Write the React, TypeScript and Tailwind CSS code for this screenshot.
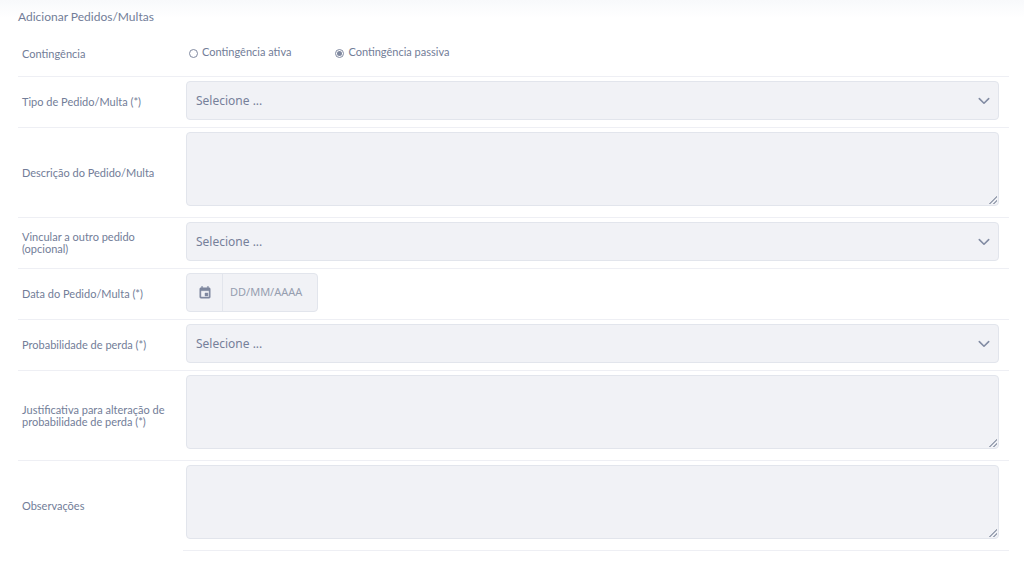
import type { ReactNode } from 'react';

const controlStyle =
  'block w-full rounded border border-[#e2e5ec] bg-[#f1f2f6] font-["Noto_Sans",sans-serif] text-xs text-[#76809a] outline-none focus:border-[#8a93a8]';

const resizerStyle =
  '[&::-webkit-resizer]:bg-[linear-gradient(135deg,transparent_50%,#a0a7b6_50%,#a0a7b6_60%,transparent_60%,transparent_74%,#a0a7b6_74%,#a0a7b6_84%,transparent_84%)] [&::-webkit-resizer]:bg-[length:8px_8px] [&::-webkit-resizer]:bg-[position:right_1px_bottom_1px] [&::-webkit-resizer]:bg-no-repeat';

function Row({ label, htmlFor, last, children }: { label: string; htmlFor: string; last?: boolean; children: ReactNode }) {
  return (
    <div className={last ? 'flex' : 'flex border-b border-[#eeeff4]'}>
      <div className="flex w-[165px] shrink-0 items-center pl-1 pr-4">
        <label htmlFor={htmlFor} className="text-[11px] leading-3">
          {label}
        </label>
      </div>
      <div className={last ? 'min-w-0 grow border-b border-[#eeeff4] pl-[3px] pr-[10px] pt-1' : 'min-w-0 grow pl-[3px] pr-[10px] pt-1'}>
        {children}
      </div>
    </div>
  );
}

function SelectRow({ id, label }: { id: string; label: string }) {
  return (
    <Row label={label} htmlFor={id}>
      <div className="relative mb-[7px]">
        <select id={id} className={`${controlStyle} h-[39px] appearance-none pl-[9px] pr-8`}>
          <option>Selecione ...</option>
        </select>
        <svg
          aria-hidden="true"
          viewBox="0 0 12 8"
          className="pointer-events-none absolute right-[9px] top-4 h-2 w-3"
          fill="none"
          stroke="#828ca3"
          strokeWidth="1.6"
          strokeLinecap="round"
          strokeLinejoin="round"
        >
          <path d="M1.3 1.6 6 6.2l4.7-4.6" />
        </svg>
      </div>
    </Row>
  );
}

function TextRow({ id, label, last }: { id: string; label: string; last?: boolean }) {
  return (
    <Row label={label} htmlFor={id} last={last}>
      <textarea id={id} className={`${controlStyle} ${resizerStyle} mb-[11px] h-[74px] resize px-[9px] py-2`} />
    </Row>
  );
}

function Radio({ id, label, checked }: { id: string; label: string; checked?: boolean }) {
  return (
    <label htmlFor={id} className="flex items-center gap-1 text-[11px] leading-3">
      <input
        id={id}
        type="radio"
        name="contingencia"
        defaultChecked={checked}
        className="mt-[3px] size-[9px] appearance-none rounded-full border border-[#8089a0] bg-white checked:bg-[#8089a0] checked:bg-clip-content checked:p-px"
      />
      {label}
    </label>
  );
}

export default function App() {
  return (
    <main className="min-h-screen bg-white bg-[linear-gradient(#f8f9fb_0,#f9fafc_3px,#ffffff_18px)] pl-[18px] pr-[15px] pt-[9px] font-[Lato,sans-serif] text-[#727d98]">
      <form>
        <h1 className="text-xs leading-4">Adicionar Pedidos/Multas</h1>
        <div
          role="radiogroup"
          aria-labelledby="contingencia-titulo"
          className="mt-[6px] flex h-[46px] items-center border-b border-[#eeeff4]"
        >
          <div id="contingencia-titulo" className="w-[171px] shrink-0 pl-1 text-[11px] leading-3">
            Contingência
          </div>
          <div className="flex gap-11 pb-[3px]">
            <Radio id="ativa" label="Contingência ativa" />
            <Radio id="passiva" label="Contingência passiva" checked />
          </div>
        </div>
        <SelectRow id="tipo" label="Tipo de Pedido/Multa (*)" />
        <TextRow id="descricao" label="Descrição do Pedido/Multa" />
        <SelectRow id="vincular" label="Vincular a outro pedido (opcional)" />
        <Row label="Data do Pedido/Multa (*)" htmlFor="data">
          <div className="mb-[7px] flex h-[39px] w-[132px] overflow-hidden rounded border border-[#e2e5ec] bg-[#f1f2f6]">
            <span className="flex w-9 shrink-0 items-center justify-center border-r border-[#e2e5ec]">
              <svg aria-hidden="true" viewBox="0 0 24 24" className="size-[14px]" fill="#7f889f" stroke="#7f889f" strokeWidth="0.8">
                <path d="M17 12h-5v5h5v-5zM16 1v2H8V1H6v2H5c-1.11 0-1.99.9-1.99 2L3 19c0 1.1.89 2 2 2h14c1.1 0 2-.9 2-2V5c0-1.100-.9-2-2-2h-1V1h-2zm3 18H5V8h14v11z" />
              </svg>
            </span>
            <input
              id="data"
              type="text"
              placeholder="DD/MM/AAAA"
              className="w-full min-w-0 bg-transparent px-[7px] font-['Noto_Sans',sans-serif] text-[11px] outline-none placeholder:text-[#969eb0]"
            />
          </div>
        </Row>
        <SelectRow id="probabilidade" label="Probabilidade de perda (*)" />
        <TextRow id="justificativa" label="Justificativa para alteração de probabilidade de perda (*)" />
        <TextRow id="observacoes" label="Observações" last />
      </form>
    </main>
  );
}
